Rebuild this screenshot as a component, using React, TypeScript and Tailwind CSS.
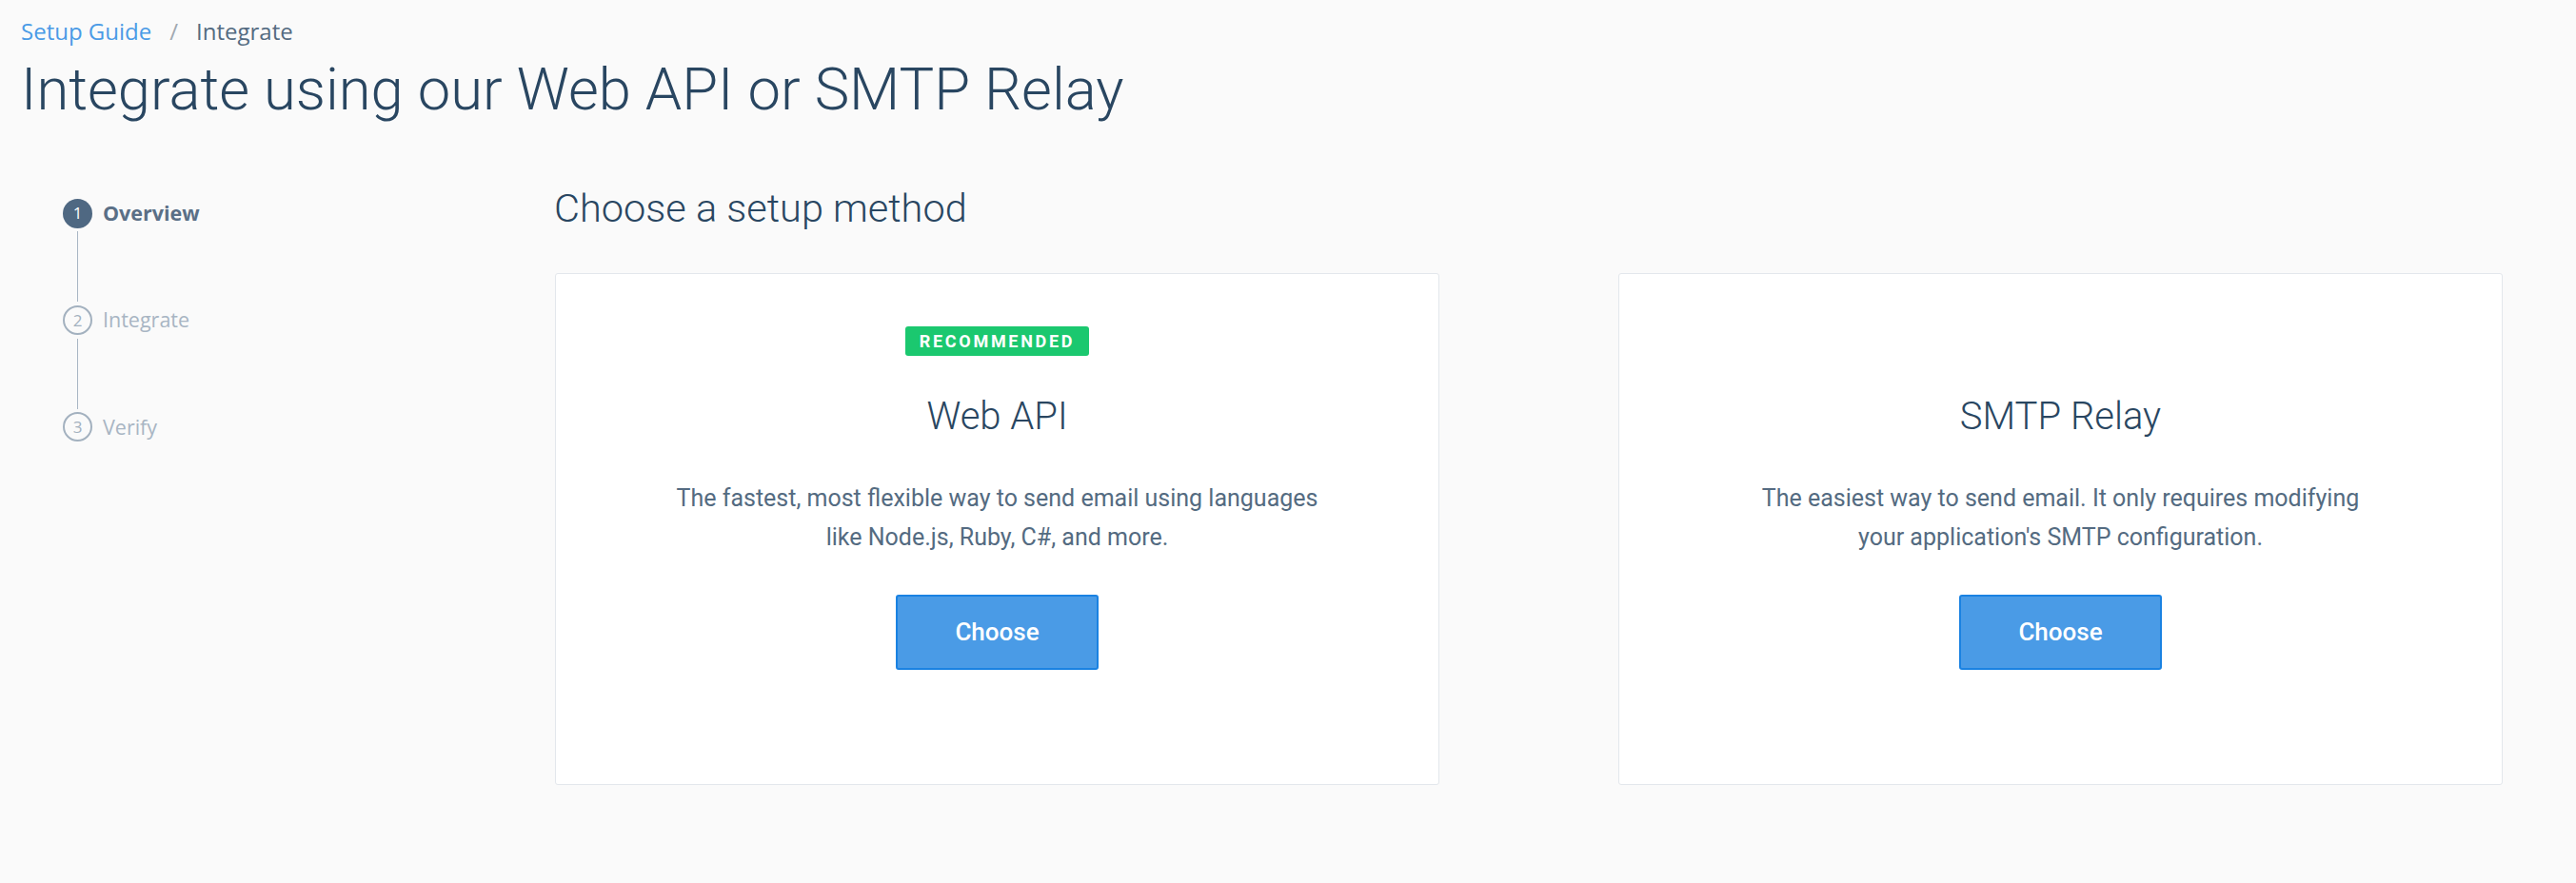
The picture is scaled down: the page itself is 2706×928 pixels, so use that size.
import React from 'react';

interface Step {
  num: number;
  label: string;
  active?: boolean;
}

const steps: Step[] = [
  { num: 1, label: 'Overview', active: true },
  { num: 2, label: 'Integrate' },
  { num: 3, label: 'Verify' },
];

const Stepper: React.FC = () => (
  <div className="flex flex-col pt-[14px] pl-[44px]">
    {steps.map((step, i) => (
      <div key={step.num} className="flex flex-col">
        <div className="flex items-center gap-[11px]">
          {step.active ? (
            <div className="w-[31px] h-[31px] rounded-full bg-[#4f6882] flex items-center justify-center text-white text-[17px] font-['Open_Sans',sans-serif]">
              {step.num}
            </div>
          ) : (
            <div className="w-[31px] h-[31px] rounded-full border-2 border-[#a3b1bf] flex items-center justify-center text-[#a3b1bf] text-[17px] font-['Open_Sans',sans-serif]">
              {step.num}
            </div>
          )}
          <span
            className={
              step.active
                ? "font-['Open_Sans',sans-serif] text-[21.5px] font-bold text-[#5a6f86]"
                : "font-['Open_Sans',sans-serif] text-[21.5px] text-[#a8b5c3]"
            }
          >
            {step.label}
          </span>
        </div>
        {i < steps.length - 1 && (
          <div className="w-[31px] flex justify-center py-[3px]">
            <div className="w-px h-[74px] bg-[#a8b6c4]" />
          </div>
        )}
      </div>
    ))}
  </div>
);

interface MethodCardProps {
  title: string;
  lines: string[];
  recommended?: boolean;
}

const MethodCard: React.FC<MethodCardProps> = ({ title, lines, recommended }) => (
  <div className="h-[538px] bg-white border border-[#e3e7ec] rounded-[3px] flex flex-col items-center pt-[55px]">
    <span
      className={
        (recommended ? '' : 'invisible ') +
        "h-[31px] px-[15px] rounded-[3px] bg-[#1bc86f] text-white text-[18px] font-bold tracking-[0.15em] flex items-center font-['Roboto',sans-serif]"
      }
    >
      RECOMMENDED
    </span>
    <h3 className="mt-[40px] text-[40px] leading-[48px] font-light text-[#294661] font-['Roboto',sans-serif]">
      {title}
    </h3>
    <p className="mt-[41px] text-[25px] leading-[41px] text-[#546b81] text-center font-['Roboto',sans-serif]">
      {lines[0]}
      <br />
      {lines[1]}
    </p>
    <button className="mt-[40px] w-[213px] h-[79px] rounded-[3px] bg-[#4a9be6] border-2 border-[#1a82e2] text-white text-[26px] font-medium font-['Roboto',sans-serif]">
      Choose
    </button>
  </div>
);

export default function App() {
  return (
    <div className="min-h-screen bg-[#fafafa] pl-[22px] pr-[77px] pt-[17px] font-['Roboto',sans-serif]">
      <nav className="flex items-center text-[24px] leading-[32px] font-['Open_Sans',sans-serif]">
        <span className="text-[#4a9be6]">Setup Guide</span>
        <span className="mx-[19px] text-[#a0a8b0]">/</span>
        <span className="text-[#546b81]">Integrate</span>
      </nav>
      <h1 className="mt-[8px] text-[61.5px] leading-[74px] font-light text-[#294661]">
        Integrate using our Web API or SMTP Relay
      </h1>
      <div className="mt-[63px] flex">
        <div className="w-[561px] shrink-0">
          <Stepper />
        </div>
        <div className="flex-1">
          <h2 className="-ml-[1px] text-[41.5px] leading-[49px] font-light text-[#294661]">Choose a setup method</h2>
          <div className="mt-[44px] grid grid-cols-2 gap-[188px]">
            <MethodCard
              recommended
              title="Web API"
              lines={['The fastest, most flexible way to send email using languages', 'like Node.js, Ruby, C#, and more.']}
            />
            <MethodCard
              title="SMTP Relay"
              lines={['The easiest way to send email. It only requires modifying', "your application's SMTP configuration."]}
            />
          </div>
        </div>
      </div>
    </div>
  );
}
